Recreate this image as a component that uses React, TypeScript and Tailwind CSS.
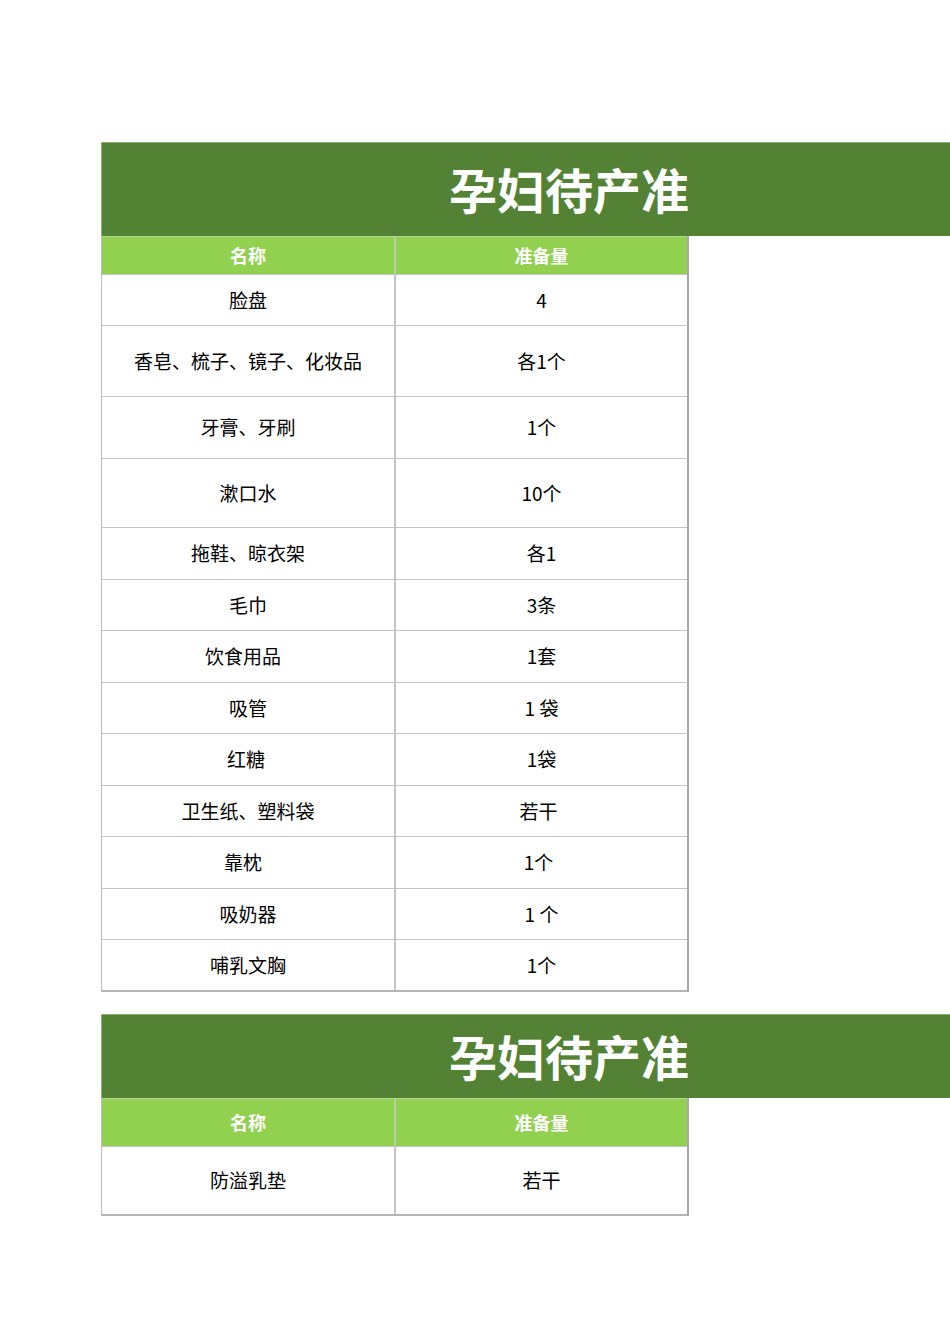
const FONT = '"Noto Sans CJK SC", "Noto Sans", sans-serif';

type Row = { name: string; qty: string; h: number; nameCls?: string; qtyCls?: string };

const firstRows: Row[] = [
  { name: '脸盘', qty: '4', h: 51 },
  { name: '香皂、梳子、镜子、化妆品', qty: '各1个', h: 71 },
  { name: '牙膏、牙刷', qty: '1个', h: 62 },
  { name: '漱口水', qty: '10个', h: 69 },
  { name: '拖鞋、晾衣架', qty: '各1', h: 52 },
  { name: '毛巾', qty: '3条', h: 51 },
  { name: '饮食用品', qty: '1套', h: 52, nameCls: 'pr-[10px]' },
  { name: '吸管', qty: '1 袋', h: 51 },
  { name: '红糖', qty: '1袋', h: 52, nameCls: 'pr-[4px]' },
  { name: '卫生纸、塑料袋', qty: '若干', h: 51, qtyCls: 'pr-[6px]' },
  { name: '靠枕', qty: '1个', h: 52, nameCls: 'pr-[10px]', qtyCls: 'pr-[6px]' },
  { name: '吸奶器', qty: '1 个', h: 51 },
  { name: '哺乳文胸', qty: '1个', h: 51 },
];

const secondRows: Row[] = [{ name: '防溢乳垫', qty: '若干', h: 68 }];

function Sheet({ rows, headH, barH }: { rows: Row[]; headH: number; barH: number }) {
  return (
    <div>
      {/* Title bar */}
      <div className="flex bg-[#548235] border-t border-l border-[#8fb070]" style={{ height: barH }}>
        <div className="flex w-[587px] items-center justify-end overflow-hidden pb-[3px]">
          <span className="whitespace-nowrap text-[48px] font-bold leading-none text-white">孕妇待产准</span>
        </div>
      </div>

      {/* Table */}
      <div className="w-[588px] border-l border-r-2 border-[#bdbdbd] border-r-[#a8a8a8]">
        <div className="flex bg-[#92d050] border-t border-[#b5d69a]" style={{ height: headH }}>
          <div className="flex w-[294px] items-center justify-center border-r-2 border-[#b8cfa6] text-[18px] font-bold text-white">
            名称
          </div>
          <div className="flex flex-1 items-center justify-center text-[18px] font-bold text-white">准备量</div>
        </div>
        {rows.map((r) => (
          <div key={r.name} className="flex border-t border-[#c4c4c4] bg-white" style={{ height: r.h }}>
            <div
              className={`flex w-[294px] items-center justify-center border-r-2 border-[#c4c4c4] text-[19px] text-black ${r.nameCls ?? ''}`}
            >
              {r.name}
            </div>
            <div className={`flex flex-1 items-center justify-center text-[19px] text-black ${r.qtyCls ?? ''}`}>
              {r.qty}
            </div>
          </div>
        ))}
        <div className="border-t-2 border-[#b5b5b5]" />
      </div>
    </div>
  );
}

export default function App() {
  return (
    <div className="min-h-[1344px] w-[950px] overflow-hidden bg-white pl-[101px] pt-[142px]" style={{ fontFamily: FONT }}>
      <Sheet rows={firstRows} headH={38} barH={94} />
      <div className="h-[22px]" />
      <Sheet rows={secondRows} headH={48} barH={84} />
    </div>
  );
}
